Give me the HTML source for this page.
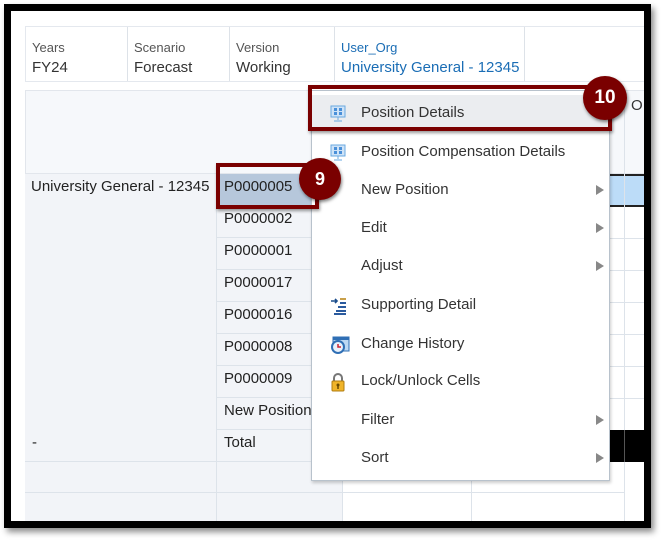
<!DOCTYPE html>
<html><head><meta charset="utf-8"><style>
*{margin:0;padding:0;box-sizing:border-box}
body{width:661px;height:541px;background:#fff;position:relative;overflow:hidden;font-family:"Liberation Sans",Arial,sans-serif;}
.frame{position:absolute;left:4px;top:4px;width:647px;height:524px;border:7px solid #000;background:#fff;box-shadow:3px 4px 6px rgba(0,0,0,.45);overflow:hidden}
.abs{position:absolute}
.pov{position:absolute;left:14px;top:15px;width:640px;height:56px;border:1px solid #e4e8ee;}
.pov div{position:absolute;top:0;height:54px;border-right:1px solid #dde2e8;font-size:15px;color:#333;padding:12px 0 0 6px;line-height:22px;white-space:nowrap}
.pov small{font-size:13px;color:#555;display:block;line-height:18px}
.cell{position:absolute;border-right:1px solid #dde3ea;border-bottom:1px solid #dde3ea;font-size:15px;color:#222;padding:4px 0 0 7px;white-space:nowrap;overflow:hidden}
.menu{position:absolute;left:300px;top:79px;width:299px;height:391px;background:#fff;border:1px solid #b8c2cc;box-shadow:1px 2px 3px rgba(0,0,0,.2)}
.mi{position:absolute;left:0;width:297px;height:36px;font-size:15px;color:#333;padding-left:49px;line-height:36px;white-space:nowrap}
.arr{position:absolute;right:5px;top:13px;width:0;height:0;border-left:8px solid #888;border-top:5px solid transparent;border-bottom:5px solid transparent}
.ic{position:absolute;left:18px;top:10px}
.circ{position:absolute;border-radius:50%;background:#7a0000;color:#fff;font-weight:bold;text-align:center;box-shadow:1px 2px 3px rgba(0,0,0,.5)}
</style></head><body>
<div class="frame">
 <div class="pov">
  <div style="left:0;width:102px"><small>Years</small>FY24</div>
  <div style="left:102px;width:102px"><small>Scenario</small>Forecast</div>
  <div style="left:204px;width:105px"><small>Version</small>Working</div>
  <div style="left:309px;width:190px;color:#1a6db5"><small style="color:#1a6db5">User_Org</small>University General - 12345</div>
 </div>
 <!-- grid -->
 <div class="abs" style="left:14px;top:79px;width:630px;height:84px;background:#f6f8fb;border:1px solid #e2e6ec"></div>
 <div class="abs" style="left:14px;top:163px;width:192px;height:258px;background:#f2f4f8;border-right:1px solid #dde3ea;border-bottom:1px solid #dde3ea;font-size:15px;color:#222;padding:4px 0 0 6px;white-space:nowrap">University General - 12345</div>
 <div class="cell" style="left:206px;top:163px;width:126px;height:32px;background:#b6c7db">P0000005</div>
 <div class="cell" style="left:206px;top:195px;width:126px;height:32px;background:#f2f4f8">P0000002</div>
 <div class="cell" style="left:206px;top:227px;width:126px;height:32px;background:#f2f4f8">P0000001</div>
 <div class="cell" style="left:206px;top:259px;width:126px;height:32px;background:#f2f4f8">P0000017</div>
 <div class="cell" style="left:206px;top:291px;width:126px;height:32px;background:#f2f4f8">P0000016</div>
 <div class="cell" style="left:206px;top:323px;width:126px;height:32px;background:#f2f4f8">P0000008</div>
 <div class="cell" style="left:206px;top:355px;width:126px;height:32px;background:#f2f4f8">P0000009</div>
 <div class="cell" style="left:206px;top:387px;width:126px;height:32px;background:#f2f4f8">New Position</div>
 <div class="cell" style="left:14px;top:419px;width:192px;height:32px;background:#f2f4f8">-</div>
 <div class="cell" style="left:206px;top:419px;width:126px;height:32px;background:#f2f4f8">Total</div>
 <div class="cell" style="left:14px;top:451px;width:192px;height:31px;background:#f2f4f8"></div>
 <div class="cell" style="left:206px;top:451px;width:126px;height:31px;background:#f2f4f8"></div>
 <div class="cell" style="left:14px;top:482px;width:192px;height:40px;background:#f2f4f8"></div>
 <div class="cell" style="left:206px;top:482px;width:126px;height:40px;background:#f2f4f8"></div>
 <div class="cell" style="left:332px;top:451px;width:129px;height:31px"></div>
 <div class="cell" style="left:461px;top:451px;width:153px;height:31px"></div>
 <div class="cell" style="left:332px;top:482px;width:129px;height:40px"></div>
 <div class="cell" style="left:461px;top:482px;width:153px;height:40px"></div>
 <!-- right columns -->
 <div class="abs" style="left:598px;top:163px;width:40px;height:33px;background:#bcdcf8;border-top:2px solid #222;border-bottom:2px solid #222"></div>
 <div class="abs" style="left:613px;top:79px;width:1px;height:440px;background:#dde3ea"></div>
 <div class="abs" style="left:598px;top:227px;width:40px;height:1px;background:#dde3ea"></div>
 <div class="abs" style="left:598px;top:259px;width:40px;height:1px;background:#dde3ea"></div>
 <div class="abs" style="left:598px;top:291px;width:40px;height:1px;background:#dde3ea"></div>
 <div class="abs" style="left:598px;top:323px;width:40px;height:1px;background:#dde3ea"></div>
 <div class="abs" style="left:598px;top:355px;width:40px;height:1px;background:#dde3ea"></div>
 <div class="abs" style="left:598px;top:387px;width:40px;height:1px;background:#dde3ea"></div>
 <div class="abs" style="left:598px;top:419px;width:40px;height:32px;background:#000"></div>
 <div class="abs" style="left:613px;top:419px;width:1px;height:32px;background:#555"></div>
 <div class="abs" style="left:620px;top:86px;font-size:15px;color:#333">O</div>
 <!-- menu -->
 <div class="menu">
  <div class="mi" style="top:4px;background:#ebedf0"><svg class="ic" width="16" height="17" viewBox="0 0 16 17"><rect x="1" y="1" width="14" height="11" fill="#cfe3f7" stroke="#6aa9e0"/><rect x="4" y="3" width="3" height="3" fill="#4a90d9"/><rect x="9" y="3" width="3" height="3" fill="#4a90d9"/><rect x="4" y="7" width="3" height="3" fill="#4a90d9"/><rect x="9" y="7" width="3" height="3" fill="#4a90d9"/><path d="M8 12v3M4 16h8" stroke="#6aa9e0"/></svg>Position Details</div>
  <div class="mi" style="top:43px"><svg class="ic" width="16" height="17" viewBox="0 0 16 17"><rect x="1" y="1" width="14" height="11" fill="#cfe3f7" stroke="#6aa9e0"/><rect x="4" y="3" width="3" height="3" fill="#4a90d9"/><rect x="9" y="3" width="3" height="3" fill="#4a90d9"/><rect x="4" y="7" width="3" height="3" fill="#4a90d9"/><rect x="9" y="7" width="3" height="3" fill="#4a90d9"/><path d="M8 12v3M4 16h8" stroke="#6aa9e0"/></svg>Position Compensation Details</div>
  <div class="mi" style="top:81px">New Position<span class="arr"></span></div>
  <div class="mi" style="top:119px">Edit<span class="arr"></span></div>
  <div class="mi" style="top:157px">Adjust<span class="arr"></span></div>
  <div class="mi" style="top:196px"><svg class="ic" width="18" height="18" viewBox="0 0 18 18"><path d="M1 4h6M5 2l2 2-2 2" stroke="#1c4e8c" stroke-width="1.6" fill="none"/><path d="M10 2h6" stroke="#c9a04a" stroke-width="2"/><path d="M10 6h6M8 10h8M6 14h10M4 17h12" stroke="#2a5a9e" stroke-width="2"/></svg>Supporting Detail</div>
  <div class="mi" style="top:235px"><svg class="ic" width="20" height="18" viewBox="0 0 20 18"><rect x="3" y="1" width="16" height="14" fill="#bcd8f3" stroke="#2f6fb5"/><rect x="3" y="1" width="16" height="3" fill="#2f6fb5"/><circle cx="8" cy="11" r="6" fill="#e8f1fb" stroke="#2f6fb5" stroke-width="2"/><path d="M8 8v3h3" stroke="#c23" stroke-width="1.5" fill="none"/></svg>Change History</div>
  <div class="mi" style="top:272px"><svg class="ic" width="16" height="19" viewBox="0 0 16 19"><path d="M4 8V5a4 4 0 0 1 8 0v3" stroke="#777" stroke-width="2" fill="none"/><rect x="2" y="8" width="12" height="10" rx="1" fill="#f0b429" stroke="#b07d10"/><circle cx="8" cy="12" r="1.5" fill="#6b4a00"/><path d="M8 13v3" stroke="#6b4a00" stroke-width="1.5"/></svg>Lock/Unlock Cells</div>
  <div class="mi" style="top:311px">Filter<span class="arr"></span></div>
  <div class="mi" style="top:349px">Sort<span class="arr"></span></div>
 </div>
 <!-- callouts -->
 <div class="abs" style="left:297px;top:74px;width:304px;height:46px;border:4px solid #7a0000;box-shadow:1px 2px 3px rgba(0,0,0,.4)"></div>
 <div class="circ" style="left:572px;top:65px;width:44px;height:44px;line-height:44px;font-size:19px">10</div>
 <div class="abs" style="left:205px;top:152px;width:103px;height:46px;border:4px solid #7a0000;box-shadow:1px 2px 3px rgba(0,0,0,.4)"></div>
 <div class="circ" style="left:288px;top:147px;width:42px;height:42px;line-height:42px;font-size:18px">9</div>
</div>
</body></html>
